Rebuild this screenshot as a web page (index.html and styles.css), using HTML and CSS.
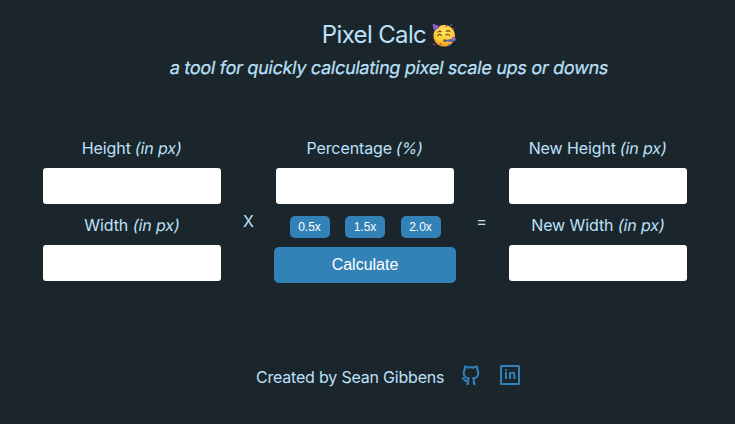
FILE: index.html
```html
<!DOCTYPE html>
<html lang="en">
<head>
<meta charset="utf-8">
<title>Pixel Calc</title>
<link rel="stylesheet" href="styles.css">
</head>
<body>
<header class="header">
  <h1 class="title"><span>Pixel Calc</span>
    <svg class="party" viewBox="0 0 24 24" aria-hidden="true">
      <defs><radialGradient id="face" cx="50%" cy="35%" r="65%"><stop offset="0" stop-color="#ffe45c"/><stop offset=".65" stop-color="#fccb3c"/><stop offset="1" stop-color="#ed9422"/></radialGradient></defs>
      <circle cx="12.2" cy="12.8" r="10.8" fill="url(#face)"/>
      <path d="M.3.4 8.1 3.5 2.3 8.4Z" fill="#7148b8"/>
      <path d="m2.2 1.2-.5 4.4M4.8 2.2 4 7" stroke="#b777dd" stroke-width="1"/>
      <path d="M6 9.1q1.7-1.8 3.2-.4M14.4 8.3q1.8-1.4 3.4.3M5.7 12.6q1.8-2.3 3.7-.2M13.8 12.2q1.9-2.1 3.7.2" fill="none" stroke="#744313" stroke-width="1.1" stroke-linecap="round"/>
      <circle cx="12.8" cy="17.7" r="1.4" fill="#754116"/>
      <path d="m13.4 17 7.5-1.3.6 3.2-8-.5Z" fill="#5265b6"/>
      <circle cx="21.8" cy="16.2" r="1.5" fill="none" stroke="#705bbd" stroke-width="1.3"/>
      <path d="m13 3 2-.8.4 1.3-1.6.8ZM8 20l2 .5-.5 1.5-2-.4Z" fill="#e44949"/>
      <path d="m18.7 1.1 1.5.5-.5 1.5-1.4-.5ZM16.5 21l1.7.7-1 1.5-1.2-.8Z" fill="#3f77d1"/>
      <path d="m1.4 20.6 1.5.3-.3 1.7-1.4-.4ZM20.8 5l1.4.6-.6 1.2-1.2-.4Z" fill="#bd5274"/>
    </svg>
  </h1>
  <p class="tagline"><em>a tool for quickly calculating pixel scale ups or downs</em></p>
</header>
<main class="calculator">
  <section class="column">
    <label class="label" for="height">Height <em>(in px)</em></label>
    <input class="field" id="height">
    <label class="label" for="width">Width <em>(in px)</em></label>
    <input class="field" id="width">
  </section>
  <span class="operator">X</span>
  <section class="column">
    <label class="label" for="percentage">Percentage <em>(%)</em></label>
    <input class="field" id="percentage">
    <div class="presets"><button>0.5x</button><button>1.5x</button><button>2.0x</button></div>
    <button class="calculate">Calculate</button>
  </section>
  <span class="operator">=</span>
  <section class="column">
    <label class="label" for="new-height">New Height <em>(in px)</em></label>
    <input class="field" id="new-height">
    <label class="label" for="new-width">New Width <em>(in px)</em></label>
    <input class="field" id="new-width">
  </section>
</main>
<footer class="footer">
  <span class="credit">Created by Sean Gibbens</span>
  <svg class="icon" viewBox="0 0 24 24" aria-label="GitHub"><path d="M5.883 18.653c-.3-.2-.558-.455-.86-.816a50.32 50.32 0 0 1-.466-.579c-.463-.575-.755-.84-1.057-.949a1 1 0 0 1 .676-1.883c.752.27 1.261.735 1.947 1.588-.094-.117.34.427.433.539.19.227.33.365.44.438.204.137.587.196 1.15.14.023-.382.094-.753.202-1.095C5.38 15.31 3.7 13.396 3.7 9.64c0-1.24.37-2.356 1.058-3.292-.218-.894-.185-1.975.302-3.192a1 1 0 0 1 .63-.582c.081-.024.127-.035.208-.047.803-.123 1.937.17 3.415 1.096A11.731 11.731 0 0 1 12 3.315c.912 0 1.818.104 2.684.308 1.477-.933 2.613-1.226 3.422-1.096.085.013.157.03.218.05a1 1 0 0 1 .616.58c.487 1.216.52 2.297.302 3.19.691.936 1.058 2.045 1.058 3.293 0 3.757-1.674 5.665-4.642 6.392.125.415.19.879.19 1.38a300.492 300.492 0 0 1-.012 2.716 1 1 0 0 1-.019 1.958c-1.139.228-1.983-.532-1.983-1.525l.002-.446.005-.705c.005-.708.007-1.338.007-1.998 0-.697-.183-1.152-.425-1.36-.661-.57-.326-1.655.54-1.752 2.967-.333 4.337-1.482 4.337-4.66 0-.955-.312-1.744-.913-2.404a1 1 0 0 1-.19-1.045c.166-.414.237-.957.096-1.614l-.01.003c-.491.139-1.11.44-1.858.949a1 1 0 0 1-.833.135A9.626 9.626 0 0 0 12 5.315c-.89 0-1.772.119-2.592.35a1 1 0 0 1-.83-.134c-.752-.507-1.374-.807-1.868-.947-.144.653-.073 1.194.092 1.607a1 1 0 0 1-.189 1.045C6.016 7.89 5.7 8.694 5.7 9.64c0 3.172 1.371 4.328 4.322 4.66.865.097 1.201 1.177.544 1.748-.192.168-.429.732-.429 1.364v3.15c0 .986-.835 1.725-1.96 1.528a1 1 0 0 1-.04-1.962v-.99c-.91.061-1.662-.088-2.254-.485z"/></svg>
  <svg class="icon" viewBox="0 0 24 24" aria-label="LinkedIn"><path fill-rule="evenodd" d="M3.5 2h17A1.5 1.5 0 0 1 22 3.5v17a1.5 1.5 0 0 1-1.5 1.5h-17A1.5 1.5 0 0 1 2 20.5v-17A1.5 1.5 0 0 1 3.5 2ZM4 4v16h16V4ZM7 9h2v7H7ZM11 9h2v.8c.5-.7 1.2-1 2-1 1.5 0 2.3 1 2.3 2.7V16h-2v-4c0-1-.4-1.5-1.1-1.5S13 11 13 12v4h-2Z"/><circle cx="8" cy="7" r="1.1"/></svg>
</footer>
</body>
</html>
```
FILE: styles.css
```css
* { box-sizing: border-box; }
body { margin: 0; height: 424px; overflow: hidden; background: #1b262c; color: #bbe1fa; font: 16px/24px Inter, sans-serif; }
.header { padding: 17px 0 0 43px; text-align: center; }
.title { display: flex; justify-content: center; align-items: center; gap: 6px; margin: 0; font-size: 24px; line-height: 36px; font-weight: 400; letter-spacing: -.65px; }
.party { width: 24px; height: 24px; }
em { display: inline-block; font-style: normal; transform: skewX(-10deg); }
.tagline { margin: 1px 0 0; font-size: 18px; line-height: 28px; letter-spacing: -.28px; -webkit-text-stroke: .2px #bbe1fa; }
.calculator { display: grid; grid-template-columns: 182px 51px 182px 51px 182px; margin: 54px 0 0 41px; }
.column { display: flex; flex-direction: column; align-items: center; }
.label { height: 24px; margin-bottom: 8px; white-space: nowrap; letter-spacing: -.1px; }
.field { width: 178px; height: 36px; margin: 0 0 9px; padding: 0 8px; border: 0; border-radius: 3px; background: #fff; }
.operator { align-self: start; text-align: center; margin-top: 73px; }
.presets { display: flex; gap: 15.5px; margin: 3px 0 9px; }
button { padding: 0; border: 0; border-radius: 5px; color: #fff; background: #3282b8; font-family: "Liberation Sans", sans-serif; }
.presets button { width: 40px; height: 22px; font-size: 12px; }
.calculate { width: 182px; height: 36px; font-size: 16px; }
.footer { display: flex; align-items: center; margin: 73px 0 0 256px; height: 24px; }
.credit { width: 203px; padding-top: 4px; white-space: nowrap; letter-spacing: -.2px; }
.icon { width: 24px; height: 24px; margin-right: 15px; fill: #3282b8; }
```
